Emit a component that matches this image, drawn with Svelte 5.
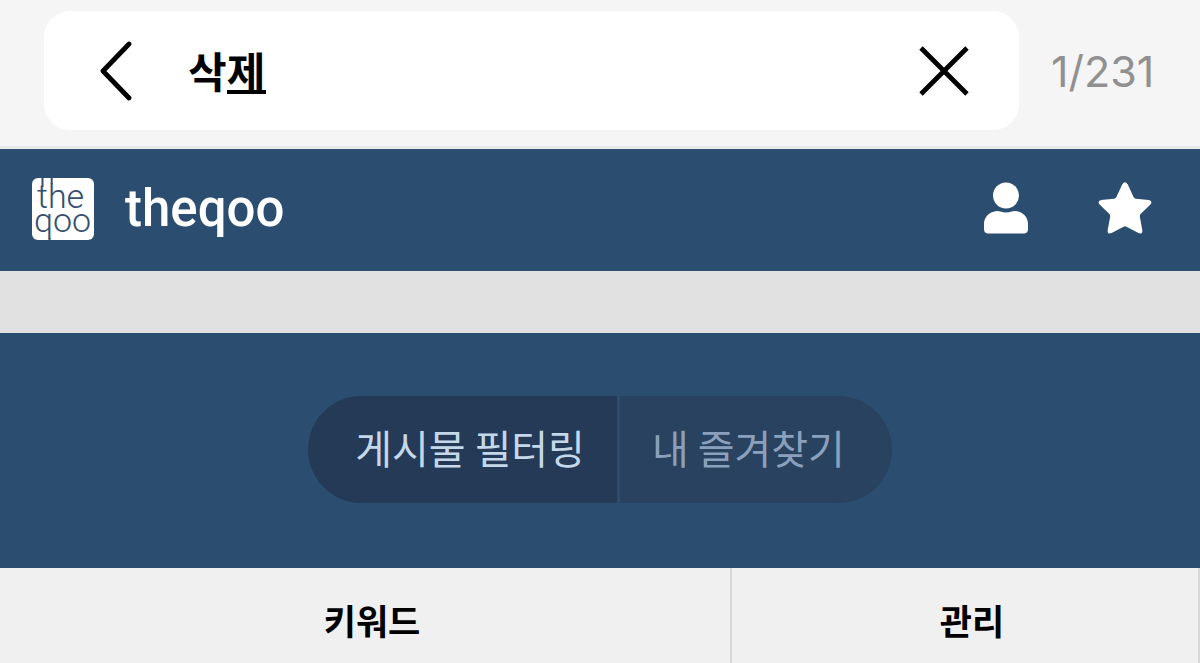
<script>
    let query = '삭제';
    let current = 1;
    let total = 231;
    let activeTab = 'filter';

    const tabs = [
        { id: 'filter', label: '게시물 필터링' },
        { id: 'favorites', label: '내 즐겨찾기' }
    ];

    function clearQuery() {
        query = '';
    }
</script>

<div class="find-bar">
    <form class="find-form" on:submit|preventDefault>
        <button class="icon-button" type="button" aria-label="뒤로">
            <svg width="32" height="60" viewBox="0 0 32 60">
                <path d="M29 3 3 30l26 27" fill="none" stroke="#000" stroke-width="4.8" stroke-linecap="round" stroke-linejoin="round" />
            </svg>
        </button>
        <input
            class="find-input"
            class:composing={query !== ''}
            type="text"
            aria-label="페이지에서 찾기"
            bind:value={query}
        />
        <button class="icon-button" type="button" aria-label="지우기" on:click={clearQuery}>
            <svg width="50" height="50" viewBox="0 0 50 50">
                <path d="M2 2l46 46M48 2 2 48" fill="none" stroke="#000" stroke-width="4.8" />
            </svg>
        </button>
    </form>
    <span class="find-count">{current}/{total}</span>
</div>

<header class="site-header">
    <a class="brand" href="/">
        <svg class="logo" width="64" height="64" viewBox="0 0 64 64" aria-hidden="true">
            <rect x="1" y="1" width="62" height="62" rx="6" fill="#fff" />
            <text x="6" y="31">the</text>
            <text x="3" y="55">qoo</text>
            <!-- stems running out to the edges of the tile -->
            <path d="M11.500 1v9M20.700 1v6M18.500 61v2" fill="none" stroke="#34506d" stroke-width="2" />
        </svg>
        <span class="brand-name">theqoo</span>
    </a>
    <nav class="header-links">
        <a href="/member" aria-label="회원">
            <svg width="44" height="52" viewBox="0 0 44 52" fill="#fff">
                <circle cx="22" cy="13.5" r="13" />
                <path d="M13 29C5.500 29.500 0 35 0 42v5q0 4.500 4.500 4.500h35q4.500 0 4.500-4.500v-5c0-7-5.500-12.500-13-13-3 0-5 1.500-9 1.500s-6-1.500-9-1.500z" />
            </svg>
        </a>
        <a href="/favorites" aria-label="즐겨찾기">
            <svg width="54" height="52" viewBox="0 0 54 52" fill="#fff">
                <path d="M24.200 2.500q2.800-4.500 5.600 0l5.900 12.700q.7 1.300 2.200 1.500l13 1.200q4.200 1.200 1.500 4.600l-9.800 9.500q-1 1-.8 2.400l2.600 14q0 4.300-4 2.700l-12-6.400q-1.400-.7-2.800 0l-12 6.400q-4 1.600-4-2.700l2.600-14q.2-1.400-.8-2.400l-9.800-9.500q-2.700-3.400 1.500-4.600l13-1.200q1.500-.2 2.200-1.500z" />
            </svg>
        </a>
    </nav>
</header>

<div class="spacer"></div>

<section class="tab-area">
    <div class="tabs">
        {#each tabs as tab}
            <button
                class="tab"
                class:active={activeTab === tab.id}
                type="button"
                on:click={() => (activeTab = tab.id)}
            >{tab.label}</button>
        {/each}
    </div>
</section>

<table class="keyword-table">
    <thead>
        <tr>
            <th class="keyword" scope="col">키워드</th>
            <th scope="col">관리</th>
        </tr>
    </thead>
</table>

<style>
    :global(body) {
        margin: 0;
        background: #f0f0f0;
        font-family: 'Noto Sans CJK KR', sans-serif;
    }

    button {
        border: none;
        font-family: inherit;
        cursor: pointer;
    }

    svg {
        display: block;
    }

    /* Find in page */
    .find-bar {
        display: flex;
        align-items: center;
        padding: 11px 44px 16px;
        background: #f5f5f5;
        border-bottom: 3px solid #e6eaea;
    }

    .find-form {
        flex: 1;
        display: flex;
        align-items: center;
        box-sizing: border-box;
        height: 119px;
        min-width: 0;
        padding: 0 50px 0 56px;
        background: #fff;
        border-radius: 26px;
    }

    .icon-button {
        padding: 0;
        background: none;
    }

    .find-input {
        flex: 1;
        min-width: 0;
        height: 60px;
        margin: 0 20px 0 56px;
        padding: 0 0 2px;
        border: none;
        outline: none;
        background: none;
        color: #000;
        font-family: inherit;
        font-size: 42px;
        font-weight: 700;
    }

    /* underline below the syllable being typed */
    .composing {
        background: linear-gradient(#000, #000) 39px 50px / 39px 4px no-repeat;
    }

    .find-count {
        flex: none;
        width: 105px;
        margin-left: 32px;
        color: #909090;
        font-family: Inter, sans-serif;
        font-size: 43px;
    }

    /* Site header */
    .site-header {
        display: flex;
        align-items: center;
        justify-content: space-between;
        box-sizing: border-box;
        height: 122px;
        padding: 0 48px 2px 31px;
        background: #2b4e70;
    }

    .brand {
        display: flex;
        align-items: center;
        gap: 30px;
        color: #fff;
        text-decoration: none;
    }

    .logo {
        fill: #34506d;
        font-family: Roboto, sans-serif;
        font-size: 34px;
        font-weight: 300;
    }

    .brand-name {
        font-family: Roboto, sans-serif;
        font-size: 51px;
        font-weight: 500;
        line-height: 64px;
    }

    .header-links {
        display: flex;
        gap: 70px;
        padding-bottom: 2px;
    }

    .spacer {
        height: 62px;
        background: #e1e1e1;
    }

    /* Tabs */
    .tab-area {
        display: flex;
        justify-content: center;
        padding: 63px 0 65px;
        background: #2b4e70;
    }

    .tabs {
        display: flex;
        gap: 3px;
    }

    .tab {
        height: 107px;
        padding: 0 47px 6px 32px;
        background: #29425f;
        color: #8ba0bd;
        font-size: 40px;
    }

    .tab:first-child {
        padding: 0 32px 6px 47px;
        border-radius: 54px 0 0 54px;
    }

    .tab:last-child {
        border-radius: 0 54px 54px 0;
    }

    .tab.active {
        background: #243a57;
        color: #c5d8ea;
    }

    /* Keyword table */
    .keyword-table {
        width: 100%;
        border-collapse: separate;
        border-spacing: 0;
        table-layout: fixed;
        background: #f0f0f0;
    }

    .keyword-table th {
        box-sizing: border-box;
        height: 107px;
        padding: 0 0 4px 14px;
        border-right: 2px solid #d8d8d8;
        color: #000;
        font-size: 35px;
        font-weight: 700;
    }

    .keyword-table .keyword {
        width: 61%;
    }
</style>
